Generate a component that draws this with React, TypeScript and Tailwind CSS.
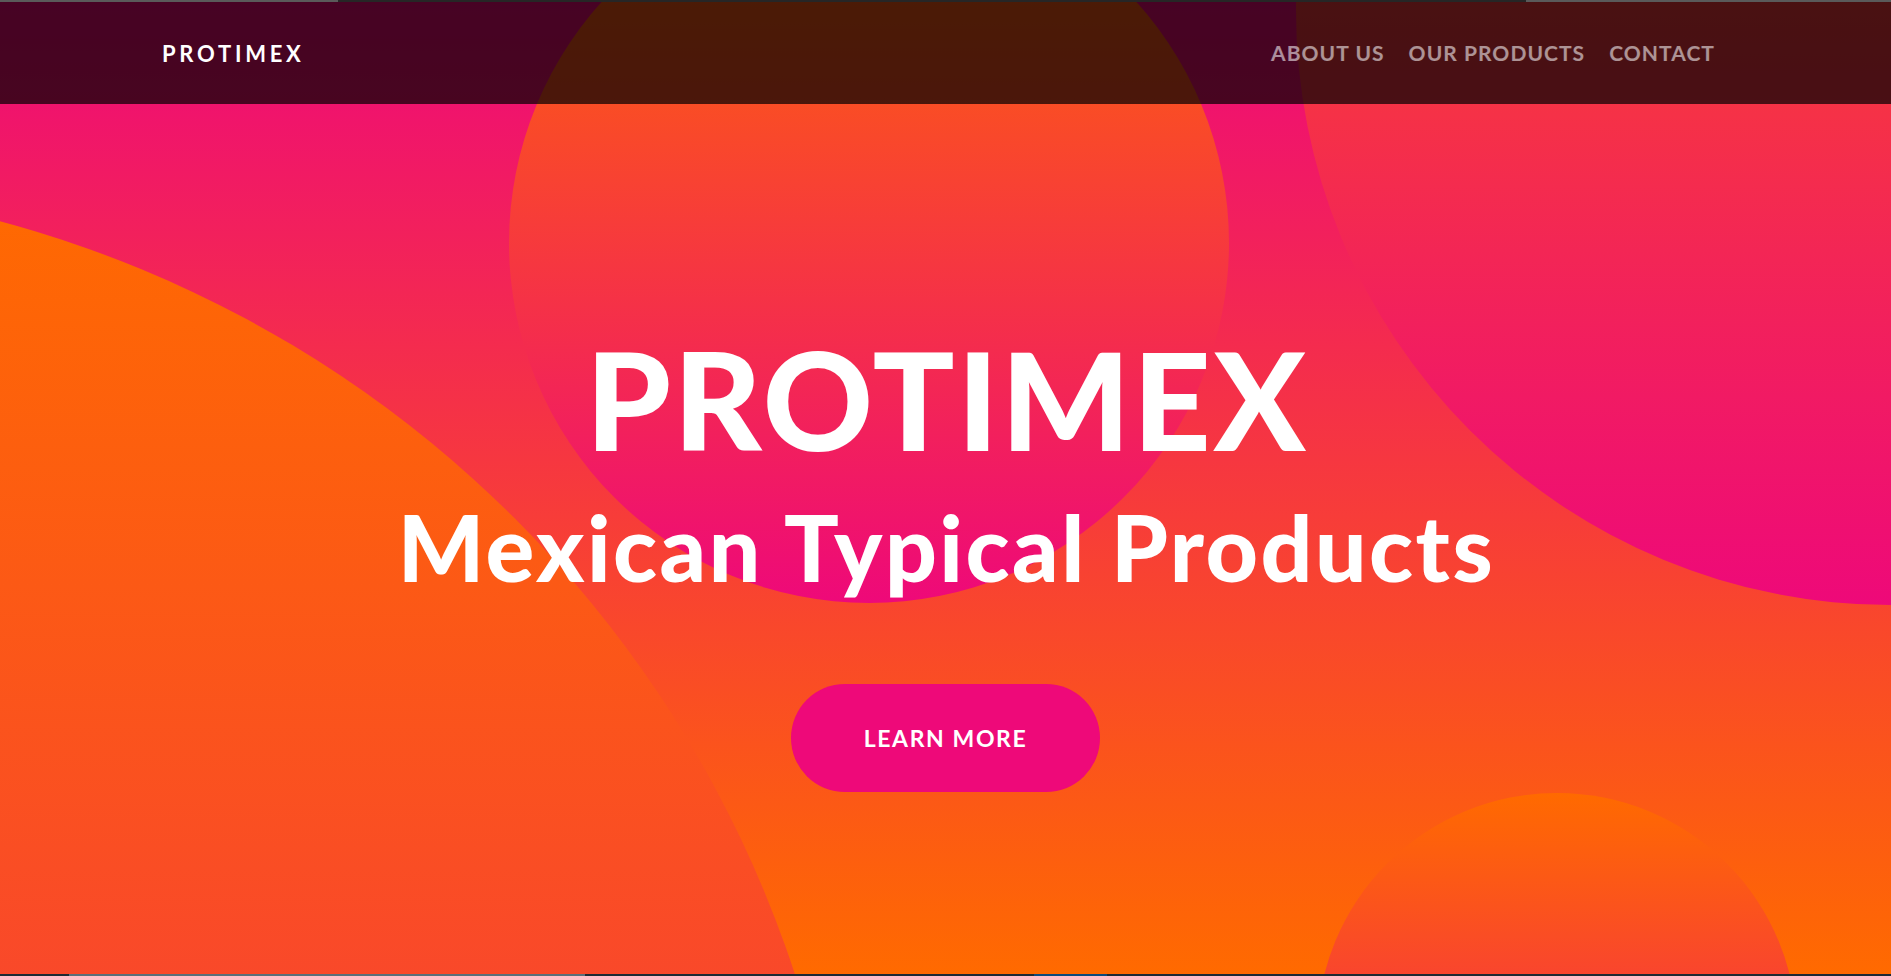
import React from 'react';

const navLinks = ['About us', 'Our products', 'Contact'];

const Circle: React.FC<{ className: string }> = ({ className }) => (
  <div
    className={`absolute rounded-full bg-[linear-gradient(to_bottom,#ff6a00,#ee0979)] ${className}`}
  />
);

const App: React.FC = () => {
  return (
    <div className="h-[976px] overflow-hidden font-['Lato',sans-serif]">
      {/* thin top edge */}
      <div className="flex h-[2px] bg-[#5a5a5a]">
        <div className="ml-[338px] w-[1188px] bg-[#262626]" />
      </div>

      <section className="relative h-[972px] overflow-hidden bg-[linear-gradient(to_bottom,#ee0979,#ff6a00)]">
        <Circle className="left-[509px] top-[-119px] h-[720px] w-[720px]" />
        <Circle className="left-[1296px] top-[-587px] h-[1190px] w-[1190px]" />
        <Circle className="left-[-1448px] top-[180px] h-[2300px] w-[2300px]" />
        <Circle className="left-[1317px] top-[791px] h-[480px] w-[480px]" />

        <header className="relative z-10 flex h-[102px] items-center justify-between bg-black/70 pl-[162px] pr-[176px]">
          <a href="#" className="text-[22px] font-bold uppercase tracking-[0.17em] text-white">
            Protimex
          </a>
          <nav className="flex items-center gap-[24px]">
            {navLinks.map((link) => (
              <a
                key={link}
                href="#"
                className="text-[21px] font-bold uppercase tracking-[0.05em] text-white/55 hover:text-white"
              >
                {link}
              </a>
            ))}
          </nav>
        </header>

        <div className="relative z-10 flex flex-col items-center">
          <h1 className="mt-[227px] pl-[3px] text-[136px] font-black uppercase leading-none tracking-[2.5px] text-white">
            Protimex
          </h1>
          <h2 className="mt-[34px] pl-[2px] text-[91px] font-black leading-none tracking-[2.5px] text-white">
            Mexican Typical Products
          </h2>
          <button className="mt-[92px] h-[108px] w-[309px] rounded-full bg-[#ee0979] text-[23px] font-bold uppercase tracking-[0.07em] text-white">
            Learn more
          </button>
        </div>
      </section>

      {/* next section peeking in */}
      <div className="flex h-[2px] bg-[#1e2a33]">
        <div className="ml-[69px] w-[516px] bg-[#5b6e7a]" />
        <div className="ml-[449px] w-[73px] bg-[#0d4a7a]" />
      </div>
    </div>
  );
};

export default App;
